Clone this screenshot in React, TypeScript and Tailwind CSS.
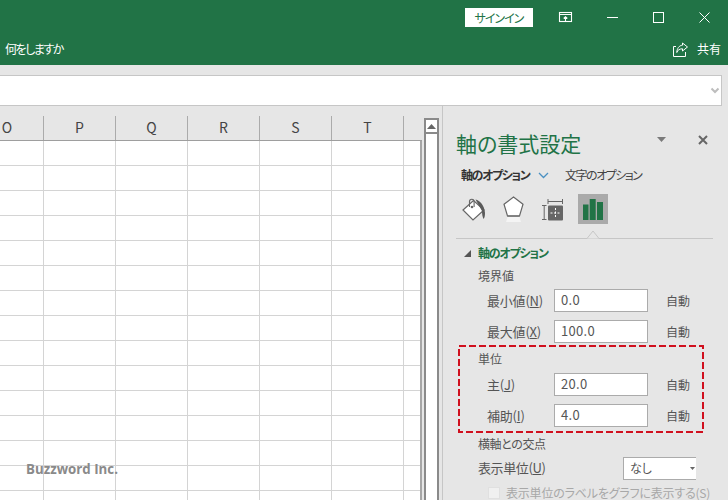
const jp = '"Noto Sans CJK JP","Liberation Sans",sans-serif';

function Row({ label, value, className = "" }: { label: React.ReactNode; value: string; className?: string }) {
  return (
    <div className={"flex items-center h-[31px] pl-[44px] " + className}>
      <div className="w-[67px] text-[13px] text-[#555] tracking-[-0.2px]">{label}</div>
      <div className="w-[94px] h-[23px] bg-white border border-[#ababab] text-[13px] leading-[19px] pl-[6px] text-[#555] tracking-[0.3px]">{value}</div>
      <div className="ml-[18px] text-[12px] text-[#555]">自動</div>
    </div>
  );
}

export default function App() {
  const cols = [
    { w: 44, t: "O" }, { w: 72, t: "P" }, { w: 72, t: "Q" }, { w: 72, t: "R" }, { w: 72, t: "S" }, { w: 72, t: "T" }, { w: 17, t: "" },
  ];
  const rows = Array.from({ length: 15 });
  return (
    <div className="relative w-[728px] h-[500px] overflow-hidden flex flex-col bg-[#e6e6e6] [font-feature-settings:'palt']" style={{ fontFamily: jp }}>
      <div className="h-[65px] bg-[#217346] text-white shrink-0 flex flex-col">
        <div className="h-[34px] flex items-center">
          <div className="ml-[465px] mt-[1px] w-[68px] h-[19px] bg-white text-[#217346] text-[12px] leading-[19px] text-center tracking-[-1px]">サインイン</div>
          <svg className="ml-[25px]" width="15" height="12" viewBox="0 0 15 12" fill="none" stroke="white" strokeWidth="1.1">
            <rect x="1.5" y="1.5" width="12" height="9" />
            <path d="M1.5 3.500H13.500M7.500 10V5.800M5.700 7.500l1.800-1.800 1.800 1.800" />
          </svg>
          <svg className="ml-[34px]" width="11" height="3" viewBox="0 0 11 3"><path d="M0 1.500H11" stroke="white" strokeWidth="1" /></svg>
          <svg className="ml-[35px]" width="11" height="11" viewBox="0 0 11 11" fill="none"><rect x="0.500" y="0.500" width="10" height="10" stroke="white" /></svg>
          <svg className="ml-[35px]" width="11" height="11" viewBox="0 0 11 11" fill="none"><path d="M.5.5l10 10M10.500.5l-10 10" stroke="white" /></svg>
        </div>
        <div className="flex items-center h-[31px] pb-[1px]">
          <div className="ml-[5px] w-[660px] text-[12px] tracking-[-1.5px]">何をしますか</div>
          <svg className="ml-[8px]" width="16" height="15" viewBox="0 0 16 15" fill="none" stroke="white" strokeWidth="1">
            <path d="M3 4.500H.5v10h12V10" />
            <path d="M9.500 1l5 4-5 4V6.800C6.500 6.800 4.800 8 3.800 10.500 4 6.500 6 3.500 9.500 3.200z" />
          </svg>
          <div className="ml-[8px] text-[12px]">共有</div>
        </div>
      </div>
      <div className="h-[10px] shrink-0" />
      <div className="h-[31px] shrink-0 bg-white border-y border-[#c6c6c6] border-r mr-[6px] relative">
        <svg className="absolute right-[1px] top-[11px]" width="10" height="7" viewBox="0 0 10 7" fill="none"><path d="M1.500 1.500l3.500 3.500 3.500-3.500" stroke="#bdbdbd" strokeWidth="2" /></svg>
      </div>
      <div className="flex-1 flex min-h-0">
        <div className="w-[422px] shrink-0 flex flex-col pt-[10px]">
          <div className="flex h-[25px] border-b border-[#9e9e9e] shrink-0">
            {cols.map((c, i) => (
              <div key={i} style={{ width: c.w }} className={"shrink-0 text-center text-[14px] leading-[22px] text-[#444] " + (i < 6 ? "border-r border-[#ababab]" : "")}>
                <span className={i === 0 ? "pr-[29px]" : ""}>{c.t}</span>
              </div>
            ))}
          </div>
          <div className="bg-white flex-1 overflow-hidden border-r-2 border-[#a6a6a6]">
            {rows.map((_, r) => (
              <div key={r} className="flex h-[25px] border-b border-[#d4d4d4]">
                {cols.map((c, i) => (
                  <div key={i} style={{ width: c.w }} className={"shrink-0 h-full " + (i < 6 ? "border-r border-[#d4d4d4]" : "")} />
                ))}
              </div>
            ))}
          </div>
        </div>
        <div className="w-[20px] shrink-0 pt-[12px] pl-[2px]">
          <div className="w-[15px] h-full bg-white border-x-2 border-[#8a8a8a] border-t-2">
            <div className="h-[14px] border-b-2 border-[#8a8a8a] flex items-center justify-center">
              <svg width="9" height="5" viewBox="0 0 9 5"><path d="M4.500 0L9 5H0z" fill="#666" /></svg>
            </div>
          </div>
        </div>
        <div className="flex-1 border-l border-[#c6c6c6] relative text-[#555]">
          <div className="pl-[13px] pt-[21px] flex items-start">
            <div className="text-[21px] leading-[32px] text-[#217346]">軸の書式設定</div>
            <svg className="absolute left-[214px] top-[31px]" width="9" height="5" viewBox="0 0 9 5"><path d="M0 0H9L4.500 5z" fill="#7a7a7a" /></svg>
            <svg className="absolute left-[255px] top-[29px]" width="10" height="10" viewBox="0 0 10 10" fill="none"><path d="M1 1l8 8M9 1l-8 8" stroke="#666" strokeWidth="2" /></svg>
          </div>
          <div className="flex items-center pl-[18px] h-[24px] mt-[4px] text-[12px]">
            <span className="font-bold text-[#333] w-[77px] whitespace-nowrap tracking-[-1.4px]">軸のオプション</span>
            <svg width="11" height="7" viewBox="0 0 11 7" fill="none"><path d="M1 1l4.500 4.500L10 1" stroke="#4a90c2" strokeWidth="1.300" /></svg>
            <span className="ml-[16px] whitespace-nowrap text-[#444] tracking-[-1.5px]">文字のオプション</span>
          </div>
          <div className="flex items-center h-[30px] mt-[7px] pl-[19px]">
            <svg width="23" height="23" viewBox="0 0 23 23" fill="none">
              <path d="M1 12L11.500 2.500 22 12 11 22z" fill="white" stroke="#666" strokeWidth="1.200" />
              <path d="M7.500 9V3.500a2.300 2.300 0 0 1 4.600 0V9" stroke="#666" strokeWidth="1.100" />
              <circle cx="10" cy="9" r="1.300" fill="#666" />
              <path d="M13.500 1.500C18 2.500 22.500 7.500 23 15c0 3-.5 5-1.500 6C20.500 19 20 16 20 13z" fill="#5a5a5a" />
            </svg>
            <svg className="ml-[18px]" width="21" height="26" viewBox="0 0 21 26" fill="none">
              <path d="M10.500 1L20 8.200 16.500 20H4.500L1 8.200z" fill="white" stroke="#666" strokeWidth="1.200" />
              <path d="M4.500 21H16.500L18 26H3z" fill="#f4f4f4" />
              <path d="M4.500 20H16.500" stroke="#777" strokeWidth="1.600" />
            </svg>
            <svg className="ml-[18px]" width="22" height="23" viewBox="0 0 22 23" fill="none">
              <path d="M6 3.500H20.500M6 1V6M20.500 1V6M0 7.500H4.500M0 21.500H4.500M2.200 7.500V21.500" stroke="#666" />
              <rect x="6" y="7.500" width="15" height="15" rx="1" fill="#666" />
              <path d="M13.500 10V20M8.500 15H18.500" stroke="white" strokeWidth="1" strokeDasharray="2 1.500" />
            </svg>
            <div className="ml-[14px] w-[30px] h-[30px] bg-[#aaaaaa] flex items-center justify-center">
              <svg width="20" height="21" viewBox="0 0 20 21"><path d="M0 5.500H5.500V21H0zM6.700 0H12.700V21H6.700zM14 3H20V21H14z" fill="#217346" /></svg>
            </div>
          </div>
          <div className="relative h-[1px] bg-[#c6c6c6] ml-[13px] mr-[15px] mt-[14px]">
            <svg className="absolute left-[128px] top-[-8px]" width="18" height="9" viewBox="0 0 18 9"><path d="M0 8.500H3L9 1l6 7.500H18" fill="#e6e6e6" stroke="#c6c6c6" /></svg>
          </div>
          <div className="flex items-center h-[20px] mt-[4px]">
            <svg className="ml-[21px]" width="7" height="7" viewBox="0 0 7 7"><path d="M7 0V7H0z" fill="#555" /></svg>
            <span className="ml-[7px] text-[12px] font-bold text-[#217346] tracking-[-1.2px]">軸のオプション</span>
          </div>
          <div className="pl-[35px] h-[22px] text-[12px] leading-[22px] mt-[2px]">境界値</div>
          <Row className="mt-[-2px]" label={<>最小値(<u>N</u>)</>} value="0.0" />
          <Row label={<>最大値(<u>X</u>)</>} value="100.0" />
          <div className="pl-[35px] h-[22px] text-[12px] leading-[22px] mt-[1px]">単位</div>
          <Row className="mt-[-1px]" label={<>主(<u>J</u>)</>} value="20.0" />
          <Row label={<>補助(<u>I</u>)</>} value="4.0" />
          <div className="pl-[35px] h-[22px] text-[12px] leading-[22px] mt-[2px] tracking-[-0.4px]">横軸との交点</div>
          <div className="flex items-center h-[30px] pl-[35px] mt-[-2px]">
            <div className="w-[145px] text-[13px] tracking-[-0.4px]">表示単位(<u>U</u>)</div>
            <div className="w-[73px] h-[23px] bg-white border border-[#ababab] border-r-0 text-[12px] leading-[20px] pl-[6px] flex items-center justify-between pr-[1px]">
              <span>なし</span>
              <svg width="5" height="3" viewBox="0 0 5 3"><path d="M0 0H5L2.500 3z" fill="#666" /></svg>
            </div>
          </div>
          <div className="flex items-center pl-[45px] mt-[4px]">
            <div className="w-[12px] h-[12px] shrink-0 bg-[#f0f0f0] border border-[#e0e0e0]" />
            <span className="ml-[6px] text-[12px] leading-[12px] whitespace-nowrap text-[#a8a8a8] tracking-[-0.2px]">表示単位のラベルをグラフに表示する(S)</span>
          </div>
          <svg className="absolute left-[15px] top-[239px]" width="246" height="88" viewBox="0 0 246 88" fill="none">
            <rect x="1" y="1" width="244" height="86" stroke="#d0101e" strokeWidth="2" strokeDasharray="7 3" />
          </svg>
        </div>
      </div>
      <div className="absolute left-[26px] top-[460px] text-[13.300px] font-bold text-[#8a8a8a]" style={{ fontFamily: '"Open Sans",sans-serif' }}>Buzzword Inc.</div>
    </div>
  );
}
